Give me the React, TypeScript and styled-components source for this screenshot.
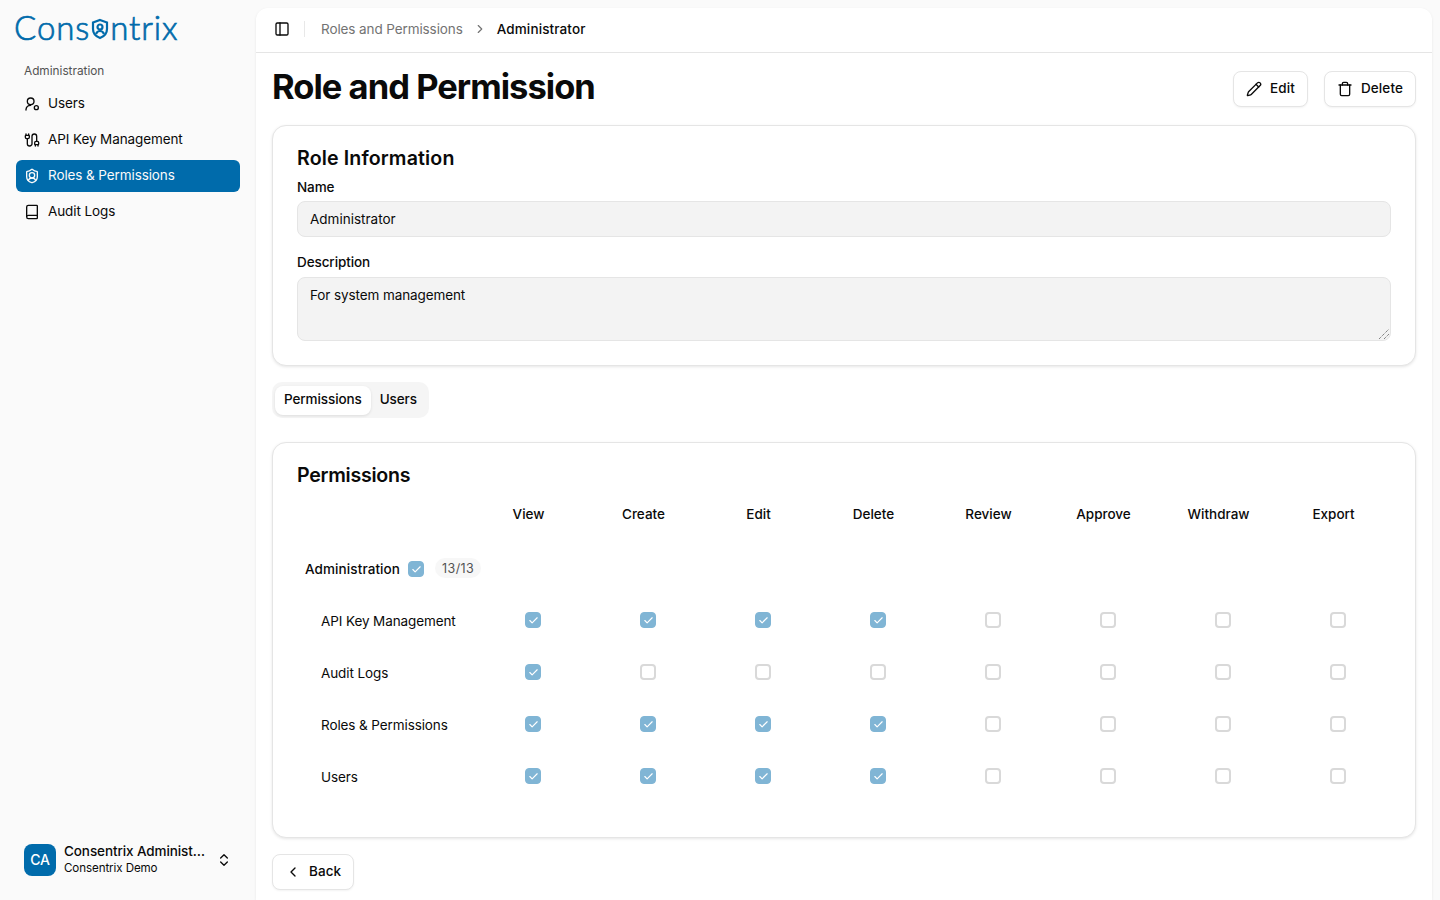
import React from "react";
import styled, { createGlobalStyle } from "styled-components";
import { Cable, Book, Check, ChevronLeft, ChevronRight, ChevronsUpDown, PanelLeft, Pencil, ShieldUser, Trash } from "lucide-react";

const FONT = `"Inter", "Noto Sans", sans-serif`;
const COLUMNS = ["View", "Create", "Edit", "Delete", "Review", "Approve", "Withdraw", "Export"];
const ROWS: { name: string; checked: number }[] = [
  { name: "API Key Management", checked: 4 },
  { name: "Audit Logs", checked: 1 },
  { name: "Roles & Permissions", checked: 4 },
  { name: "Users", checked: 4 },
];

const GlobalStyle = createGlobalStyle`
  html, body { margin: 0; padding: 0; height: 100%; background: #fafafa; }
  body { font-family: ${FONT}; color: #0a0a0a; font-size: 13.5px; letter-spacing: -0.1px; overflow: hidden; }
  * { box-sizing: border-box; }
`;

const Shell = styled.div`
  display: flex;
  width: 1440px;
  height: 900px;
  overflow: hidden;
`;

const Sidebar = styled.aside`
  width: 256px;
  flex-shrink: 0;
  display: flex;
  flex-direction: column;
  padding: 7px 16px 24px 14px;
`;

const Logo = styled.div`
  display: flex;
  align-items: center;
  height: 40px;
  font-family: "Lato", sans-serif;
  font-weight: 300;
  font-size: 33px;
  letter-spacing: 0.9px;
  color: #006bab;
  -webkit-text-stroke: 0.7px #006bab;
`;

const SectionLabel = styled.div`
  margin: 15px 0 0 10px;
  height: 18px;
  line-height: 18px;
  font-size: 11.8px;
  letter-spacing: 0;
  color: #525252;
`;

const Nav = styled.nav`
  display: flex;
  flex-direction: column;
  gap: 4px;
  margin: 8px 0 0 2px;
`;

const NavItem = styled.div<{ $active?: boolean }>`
  display: flex;
  align-items: center;
  gap: 8px;
  height: 32px;
  padding: 0 8px 3px;
  border-radius: 6px;
  background: ${(p) => (p.$active ? "#006bab" : "transparent")};
  color: ${(p) => (p.$active ? "#fafafa" : "#0a0a0a")};
  svg { margin-top: 2px; }
`;

const Account = styled.div`
  margin-top: auto;
  display: flex;
  align-items: center;
  gap: 8px;
  padding: 0 8px 0 10px;
  height: 32px;
`;

const Avatar = styled.div`
  width: 32px;
  height: 32px;
  flex-shrink: 0;
  border-radius: 8px;
  background: #006bab;
  color: #fff;
  display: flex;
  align-items: center;
  justify-content: center;
  font-size: 14px;
  font-weight: 500;
  padding-bottom: 2px;
`;

const AccountText = styled.div`
  width: 144px;
  display: flex;
  flex-direction: column;
  margin-bottom: 1px;
`;

const AccountName = styled.div`
  font-weight: 500;
  line-height: 17px;
  white-space: nowrap;
  overflow: hidden;
  text-overflow: ellipsis;
`;

const AccountOrg = styled.div`
  font-size: 11.6px;
  line-height: 16px;
`;

const Main = styled.main`
  flex: 1;
  min-width: 0;
  margin: 8px 8px 0 0;
  background: #fff;
  border-radius: 12px 12px 0 0;
  box-shadow: 0 1px 3px rgba(0, 0, 0, 0.08);
  display: flex;
  flex-direction: column;
`;

const TopBar = styled.header`
  height: 45px;
  flex-shrink: 0;
  display: flex;
  align-items: center;
  padding: 0 18px 3px;
  border-bottom: 1px solid #e5e5e5;
`;

const Divider = styled.span`
  width: 1px;
  height: 16px;
  margin: 0 16px 0 14px;
  background: #e8e8e8;
`;

const Crumb = styled.span<{ $current?: boolean }>`
  font-weight: ${(p) => (p.$current ? 500 : 400)};
  letter-spacing: ${(p) => (p.$current ? "0.12px" : "-0.1px")};
  color: ${(p) => (p.$current ? "#0a0a0a" : "#737373")};
`;

const CrumbArrow = styled.span`
  display: flex;
  margin: 0 10px;
  color: #737373;
`;

const Content = styled.div`
  flex: 1;
  display: flex;
  flex-direction: column;
  padding: 18px 16px 0;
`;

const TitleRow = styled.div`
  display: flex;
  align-items: center;
  justify-content: space-between;
  height: 36px;
`;

const Title = styled.h1`
  margin: 0 0 4px;
  font-size: 34.5px;
  line-height: 40px;
  font-weight: 700;
  letter-spacing: -0.97px;
`;

const Actions = styled.div`
  display: flex;
  gap: 16px;
`;

const Button = styled.button`
  display: inline-flex;
  align-items: center;
  gap: 8px;
  height: 36px;
  padding: 0 12px 2px;
  background: #fff;
  border: 1px solid #e5e5e5;
  border-radius: 8px;
  box-shadow: 0 1px 2px rgba(0, 0, 0, 0.05);
  font-family: ${FONT};
  font-size: 13.5px;
  font-weight: 500;
  letter-spacing: 0.1px;
  color: #0a0a0a;
  svg { margin-top: 2px; }
`;

const Card = styled.section`
  border: 1px solid #e5e5e5;
  border-radius: 14px;
  box-shadow: 0 1px 3px rgba(0, 0, 0, 0.1);
  background: #fff;
  padding: 0 24px;
`;

const InfoCard = styled(Card)`
  margin-top: 18px;
  height: 241px;
  padding-top: 19px;
`;

const CardTitle = styled.h2<{ $spacing: number }>`
  margin: 0;
  font-size: 19.6px;
  line-height: 26px;
  font-weight: 600;
  letter-spacing: ${(p) => p.$spacing}px;
`;

const FieldLabel = styled.label<{ $gap: number }>`
  display: block;
  margin-top: ${(p) => p.$gap}px;
  line-height: 16px;
  font-weight: 500;
`;

const InputBox = styled.div`
  display: flex;
  align-items: center;
  height: 36px;
  margin-top: 6px;
  padding: 0 12px 1px;
  background: #f3f3f3;
  border: 1px solid #e5e5e5;
  border-radius: 8px;
  letter-spacing: 0;
`;

const TextBox = styled.div`
  position: relative;
  height: 64px;
  margin-top: 7px;
  padding: 8px 12px;
  background: #f3f3f3;
  border: 1px solid #e5e5e5;
  border-radius: 8px;
  line-height: 18px;
`;

const Grip = styled.svg`
  position: absolute;
  right: 0;
  bottom: 0;
`;

const Tabs = styled.div`
  align-self: flex-start;
  display: flex;
  align-items: center;
  height: 36px;
  margin-top: 16px;
  padding: 3px;
  background: #f5f5f5;
  border-radius: 10px;
`;

const Tab = styled.div<{ $active?: boolean }>`
  display: flex;
  align-items: center;
  height: 29px;
  padding: 0 9px 3px;
  font-weight: 500;
  border-radius: 8px;
  background: ${(p) => (p.$active ? "#fff" : "transparent")};
  box-shadow: ${(p) => (p.$active ? "0 1px 3px rgba(0,0,0,.1)" : "none")};
`;

const PermCard = styled(Card)`
  margin-top: 24px;
  height: 396px;
  padding-top: 19px;
`;

const Row = styled.div<{ $height: number }>`
  display: grid;
  grid-template-columns: 174px repeat(8, 115px);
  align-items: center;
  height: ${(p) => p.$height}px;
`;

const HeadRow = styled(Row)`
  margin-top: 8px;
  margin-bottom: 10px;
`;

const HeadCell = styled.div`
  text-align: center;
  font-weight: 500;
  letter-spacing: 0;
`;

const GroupCell = styled.div`
  display: flex;
  align-items: center;
  gap: 8px;
  padding: 2px 0 0 8px;
  white-space: nowrap;
  font-weight: 500;
  letter-spacing: 0.1px;
`;

const Count = styled.span`
  display: inline-flex;
  align-items: center;
  height: 20px;
  margin: 0 0 2px 3px;
  padding: 0 7px;
  border-radius: 10px;
  background: #f7f7f7;
  font-size: 12.5px;
  font-weight: 400;
  letter-spacing: 0.4px;
  color: #525252;
`;

const NameCell = styled.div`
  padding: 2px 0 0 24px;
  white-space: nowrap;
`;

const CheckCell = styled.div`
  display: flex;
  justify-content: center;
  padding-left: 9px;
`;

const CheckBox = styled.span<{ $checked?: boolean }>`
  display: inline-flex;
  align-items: center;
  justify-content: center;
  flex-shrink: 0;
  width: 16px;
  height: 16px;
  border-radius: 4px;
  color: #fff;
  background: ${(p) => (p.$checked ? "#80b5d5" : "#fff")};
  border: ${(p) => (p.$checked ? "1px solid #80b5d5" : "2px solid #d9d9d9")};
`;

const BackButton = styled(Button)`
  align-self: flex-start;
  margin-top: 16px;
`;

const UsersIcon = () => (
  <svg width="16" height="16" viewBox="0 0 24 24" fill="none" stroke="currentColor" strokeWidth="2" strokeLinecap="round">
    <circle cx="10" cy="8" r="5" />
    <path d="M3 21v-1a7 7 0 0 1 7-6" />
    <circle cx="18.5" cy="17.5" r="3" />
  </svg>
);

const LogoShield = () => (
  <svg width="18" height="24" viewBox="0 0 18 24" fill="none" stroke="#006bab" strokeWidth="2.200" style={{ margin: "4px 1px 0" }}>
    <path d="M9 3 16 5.500V12c0 4.500-3 7.500-7 9-4-1.500-7-4.500-7-9V5.500Z" />
    <circle cx="9" cy="10" r="2.500" />
    <path d="M5 17c.8-2 2.200-3 4-3s3.200 1 4 3" />
  </svg>
);

export default function App() {
  return (
    <Shell>
      <GlobalStyle />
      <Sidebar>
        <Logo>
          Cons
          <LogoShield />
          ntrix
        </Logo>
        <SectionLabel>Administration</SectionLabel>
        <Nav>
          <NavItem><UsersIcon />Users</NavItem>
          <NavItem><Cable size={16} />API Key Management</NavItem>
          <NavItem $active><ShieldUser size={16} />Roles &amp; Permissions</NavItem>
          <NavItem><Book size={16} />Audit Logs</NavItem>
        </Nav>
        <Account>
          <Avatar>CA</Avatar>
          <AccountText>
            <AccountName>Consentrix Administrator</AccountName>
            <AccountOrg>Consentrix Demo</AccountOrg>
          </AccountText>
          <ChevronsUpDown size={16} />
        </Account>
      </Sidebar>
      <Main>
        <TopBar>
          <PanelLeft size={16} />
          <Divider />
          <Crumb>Roles and Permissions</Crumb>
          <CrumbArrow><ChevronRight size={14} /></CrumbArrow>
          <Crumb $current>Administrator</Crumb>
        </TopBar>
        <Content>
          <TitleRow>
            <Title>Role and Permission</Title>
            <Actions>
              <Button><Pencil size={16} />Edit</Button>
              <Button><Trash size={16} />Delete</Button>
            </Actions>
          </TitleRow>
          <InfoCard>
            <CardTitle $spacing={0.13}>Role Information</CardTitle>
            <FieldLabel $gap={8}>Name</FieldLabel>
            <InputBox>Administrator</InputBox>
            <FieldLabel $gap={17}>Description</FieldLabel>
            <TextBox>
              For system management
              <Grip width="14" height="14" viewBox="0 0 14 14" stroke="#555" strokeDasharray="1 1">
                <path d="M3 13 13 3M8 13l5-5" />
              </Grip>
            </TextBox>
          </InfoCard>
          <Tabs>
            <Tab $active>Permissions</Tab>
            <Tab>Users</Tab>
          </Tabs>
          <PermCard>
            <CardTitle $spacing={-0.27}>Permissions</CardTitle>
            <HeadRow $height={36}>
              <span />
              {COLUMNS.map((c) => <HeadCell key={c}>{c}</HeadCell>)}
            </HeadRow>
            <Row $height={52}>
              <GroupCell>
                Administration
                <CheckBox $checked><Check size={11} strokeWidth={2.5} /></CheckBox>
                <Count>13/13</Count>
              </GroupCell>
            </Row>
            {ROWS.map((r) => (
              <Row $height={52} key={r.name}>
                <NameCell>{r.name}</NameCell>
                {COLUMNS.map((c, i) => (
                  <CheckCell key={c}>
                    <CheckBox $checked={i < r.checked}>
                      {i < r.checked && <Check size={11} strokeWidth={2.5} />}
                    </CheckBox>
                  </CheckCell>
                ))}
              </Row>
            ))}
          </PermCard>
          <BackButton><ChevronLeft size={16} />Back</BackButton>
        </Content>
      </Main>
    </Shell>
  );
}
